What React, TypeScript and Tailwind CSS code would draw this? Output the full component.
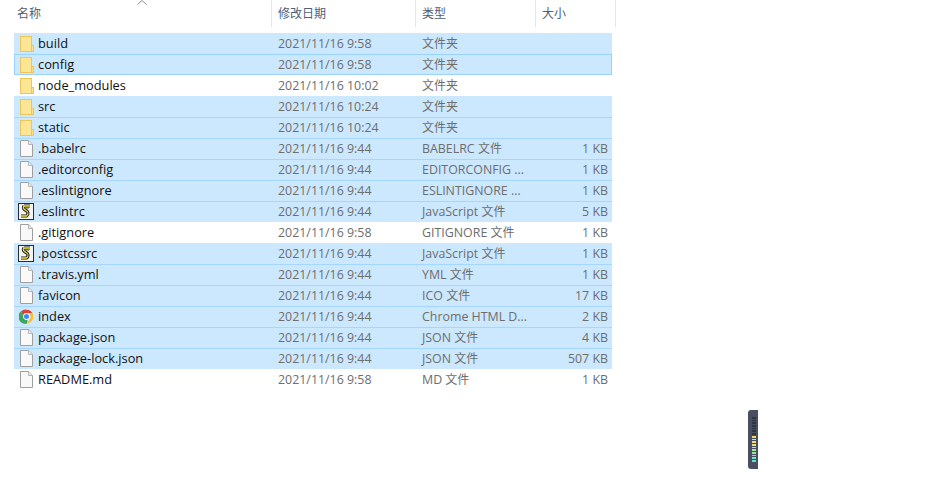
type FileRow = {
  name: string
  date: string
  type: string
  size?: string
  icon: 'folder' | 'file' | 'script' | 'chrome'
  selected?: boolean
  focused?: boolean
}

const columns = [
  { label: '名称', width: 'w-[272px]', pad: 'pl-[17px]' },
  { label: '修改日期', width: 'w-[144px]', pad: 'pl-[6px]' },
  { label: '类型', width: 'w-[120px]', pad: 'pl-[6px]' },
  { label: '大小', width: 'w-[80px]', pad: 'pl-[6px]' },
]

const rows: FileRow[] = [
  { name: 'build', date: '2021/11/16 9:58', type: '文件夹', icon: 'folder', selected: true },
  { name: 'config', date: '2021/11/16 9:58', type: '文件夹', icon: 'folder', selected: true, focused: true },
  { name: 'node_modules', date: '2021/11/16 10:02', type: '文件夹', icon: 'folder' },
  { name: 'src', date: '2021/11/16 10:24', type: '文件夹', icon: 'folder', selected: true },
  { name: 'static', date: '2021/11/16 10:24', type: '文件夹', icon: 'folder', selected: true },
  { name: '.babelrc', date: '2021/11/16 9:44', type: 'BABELRC 文件', size: '1 KB', icon: 'file', selected: true },
  { name: '.editorconfig', date: '2021/11/16 9:44', type: 'EDITORCONFIG ...', size: '1 KB', icon: 'file', selected: true },
  { name: '.eslintignore', date: '2021/11/16 9:44', type: 'ESLINTIGNORE ...', size: '1 KB', icon: 'file', selected: true },
  { name: '.eslintrc', date: '2021/11/16 9:44', type: 'JavaScript 文件', size: '5 KB', icon: 'script', selected: true },
  { name: '.gitignore', date: '2021/11/16 9:58', type: 'GITIGNORE 文件', size: '1 KB', icon: 'file' },
  { name: '.postcssrc', date: '2021/11/16 9:44', type: 'JavaScript 文件', size: '1 KB', icon: 'script', selected: true },
  { name: '.travis.yml', date: '2021/11/16 9:44', type: 'YML 文件', size: '1 KB', icon: 'file', selected: true },
  { name: 'favicon', date: '2021/11/16 9:44', type: 'ICO 文件', size: '17 KB', icon: 'file', selected: true },
  { name: 'index', date: '2021/11/16 9:44', type: 'Chrome HTML D...', size: '2 KB', icon: 'chrome', selected: true },
  { name: 'package.json', date: '2021/11/16 9:44', type: 'JSON 文件', size: '4 KB', icon: 'file', selected: true },
  { name: 'package-lock.json', date: '2021/11/16 9:44', type: 'JSON 文件', size: '507 KB', icon: 'file', selected: true },
  { name: 'README.md', date: '2021/11/16 9:58', type: 'MD 文件', size: '1 KB', icon: 'file' },
]

const meterBars = [
  '#2f3443', '#2f3443', '#2f3443', '#2f3443', '#2f3443', '#2f3443', '#2f3443',
  '#f0d85a', '#f0dc62', '#ecdf6e', '#dce27c', '#c6e48a', '#ade59a', '#96e6aa', '#82e4b8', '#72e2c4', '#66dfcc',
]

function FileIcon({ icon }: { icon: FileRow['icon'] }) {
  if (icon === 'folder') {
    return (
      <svg width="14" height="16" viewBox="0 0 14 16" className="ml-[6px] mr-[4px] shrink-0">
        <rect x="10.500" y="9.500" width="3" height="6" fill="#fbe08f" stroke="#eec557" />
        <rect x=".5" y=".5" width="11" height="15" fill="#fde596" stroke="#eec557" />
      </svg>
    )
  }
  if (icon === 'file') {
    return (
      <svg width="13" height="17" viewBox="0 0 13 17" className="ml-[6px] mr-[5px] shrink-0">
        <path d="M.5.5h8.200l3.800 3.800v12.200H.5z" fill="#f9f9f9" stroke="#9f9f9f" />
        <path d="M8.500.5v4h4" fill="#ececec" stroke="#b4b4b4" />
      </svg>
    )
  }
  if (icon === 'script') {
    return (
      <svg width="16" height="17" viewBox="0 0 16 17" className="ml-[4px] mr-[4px] shrink-0">
        <rect x=".5" y=".5" width="15" height="16" fill="#f4f4f4" stroke="#2b2b2b" />
        <path d="M6 3h6M6 3C4.500 5 6 6.500 8 7.500s3 3.500.5 5.500H3" fill="none" stroke="#1c1c1c" strokeWidth="3.200" />
        <path d="M6 3h6M6 3C4.500 5 6 6.500 8 7.500s3 3.500.5 5.500H3" fill="none" stroke="#efe22c" strokeWidth="1.300" />
        <path d="M7 5h4M8 10h3" stroke="#555" />
      </svg>
    )
  }
  return (
    <svg width="15" height="15" viewBox="0 0 48 48" className="ml-[5px] mr-[4px] shrink-0">
      <path d="M24 2a22 22 0 0 1 19 11H24a11 11 0 0 0-10.500 7.500L6 8A22 22 0 0 1 24 2z" fill="#db4437" />
      <path d="M43 13a22 22 0 0 1-17 33l8-13.500A11 11 0 0 0 33 17l-9-4z" fill="#fbc02d" />
      <path d="M26 46A22 22 0 0 1 6 8l8 13.500A11 11 0 0 0 27 34.600z" fill="#3aa757" />
      <circle cx="24" cy="24" r="10.500" fill="#fff" />
      <circle cx="24" cy="24" r="8" fill="#4285f4" />
    </svg>
  )
}

function TypeLabel({ text }: { text: string }) {
  return (
    <>
      {text.split(/(文件夹?)/).map((part, i) =>
        part.startsWith('文件') ? (
          <span key={i} className="text-[12px]">
            {part}
          </span>
        ) : (
          part
        ),
      )}
    </>
  )
}

export default function App() {
  return (
    <div className="relative h-[491px] w-[932px] overflow-hidden bg-white text-[12.4px] font-['Open_Sans','Noto_Sans_CJK_SC',sans-serif]">
      {/* column header */}
      <div className="relative flex h-[27px] w-[616px] text-[12px] text-[#4c607a]">
        {columns.map((col) => (
          <div
            key={col.label}
            className={`${col.width} ${col.pad} flex h-[27px] items-center border-r border-[#e5e5e5] pb-[2px] font-['Noto_Sans_CJK_SC',sans-serif]`}
          >
            {col.label}
          </div>
        ))}
        <svg width="10" height="5" viewBox="0 0 10 5" className="absolute left-[137px] top-0">
          <path d="M.5 4.500 5 .5l4.500 4" fill="none" stroke="#8a8f96" />
        </svg>
      </div>

      {/* file list */}
      <div className="ml-[14px] mt-[6px] w-[598px]">
        {rows.map((row, i) => {
          const prevSelected = i > 0 && rows[i - 1].selected
          let rowClass = ''
          if (row.focused) rowClass = 'bg-[#cce8ff] shadow-[inset_0_0_0_1px_#99d1ff]'
          else if (row.selected && prevSelected) rowClass = 'bg-[#cce8ff] shadow-[inset_0_1px_0_#a5d6ff]'
          else if (row.selected) rowClass = 'bg-[#cce8ff]'
          return (
            <div key={row.name} className={`flex h-[21px] items-center ${rowClass}`}>
              <div className="flex w-[258px] items-center text-[#111111]">
                <FileIcon icon={row.icon} />
                <span className="whitespace-nowrap text-[12.8px]">{row.name}</span>
              </div>
              <div className="w-[144px] pl-[6px] pt-[2px] whitespace-nowrap text-[#6d6d6d]">{row.date}</div>
              <div className="w-[114px] pl-[6px] pt-[2px] whitespace-nowrap text-[#6d6d6d]">
                <TypeLabel text={row.type} />
              </div>
              <div className="flex-1 pr-[4px] pt-[2px] text-right whitespace-nowrap text-[#6d6d6d]">{row.size}</div>
            </div>
          )
        })}
      </div>

      {/* floating meter widget */}
      <div className="absolute left-[748px] top-[410px] flex h-[59px] w-[10px] flex-col items-end gap-[1px] rounded-l-[3px] bg-[#4a4f60] pt-[7px] pr-[2px]">
        {meterBars.map((color, i) => (
          <div key={i} className="h-[1.7px] w-[4px]" style={{ backgroundColor: color }} />
        ))}
      </div>
    </div>
  )
}
